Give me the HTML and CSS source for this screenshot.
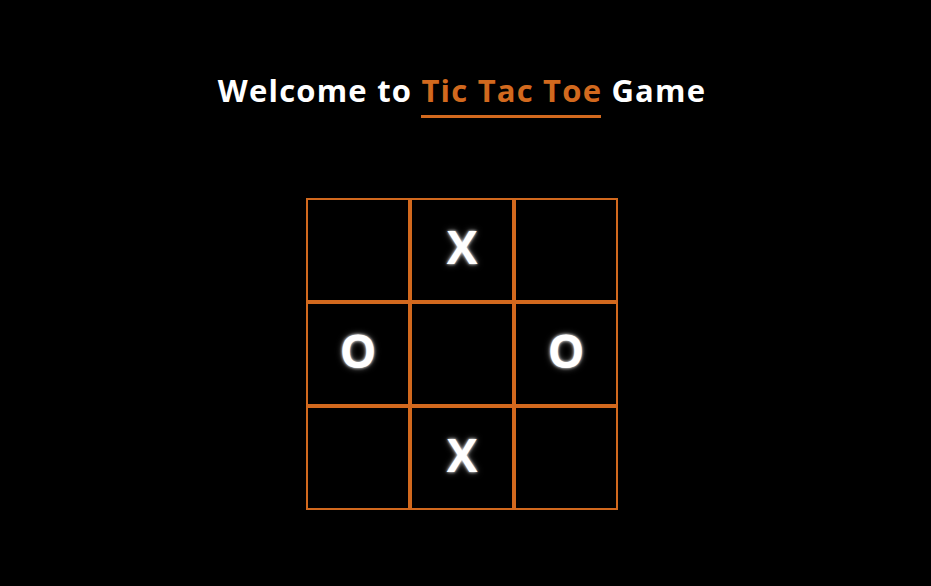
FILE: index.html
```html
<!DOCTYPE html>
<html lang="en">
<head>
<meta charset="utf-8">
<title>Tic Tac Toe</title>
<link rel="stylesheet" href="styles.css">
</head>
<body>
<main class="page">
  <h1 class="title">Welcome to <span class="accent">Tic Tac To<span class="last">e</span></span> Game</h1>
  <div class="board">
    <div class="cell"></div>
    <div class="cell">X</div>
    <div class="cell"></div>
    <div class="cell">O</div>
    <div class="cell"></div>
    <div class="cell">O</div>
    <div class="cell"></div>
    <div class="cell">X</div>
    <div class="cell"></div>
  </div>
</main>
</body>
</html>
```
FILE: styles.css
```css
html, body {
  margin: 0;
  padding: 0;
  background: #000;
}
body {
  font-family: "Open Sans", "DejaVu Sans", sans-serif;
  color: #fff;
}
.page {
  display: flex;
  flex-direction: column;
  align-items: center;
  padding: 70px 7px 0 0;
  height: 586px;
  box-sizing: border-box;
}
.title {
  margin: 0;
  font-size: 31px;
  font-weight: 700;
  line-height: 40px;
  letter-spacing: 1.2px;
  white-space: nowrap;
}
.accent {
  color: #d2691e;
  display: inline-block;
  line-height: 36px;
  padding-bottom: 7px;
  margin-right: 1.2px;
  border-bottom: 3px solid #d2691e;
}
.last {
  letter-spacing: 0;
}
.board {
  margin-top: 80px;
  display: grid;
  grid-template-columns: repeat(3, 104px);
  grid-template-rows: repeat(3, 104px);
}
.cell {
  box-sizing: border-box;
  border: 2px solid #d2691e;
  padding-bottom: 8px;
  display: flex;
  align-items: center;
  justify-content: center;
  font-size: 46px;
  font-weight: 700;
  color: #fff;
  text-shadow: 0 0 3px #fff, 0 0 6px rgba(255,255,255,0.5);
}
```
